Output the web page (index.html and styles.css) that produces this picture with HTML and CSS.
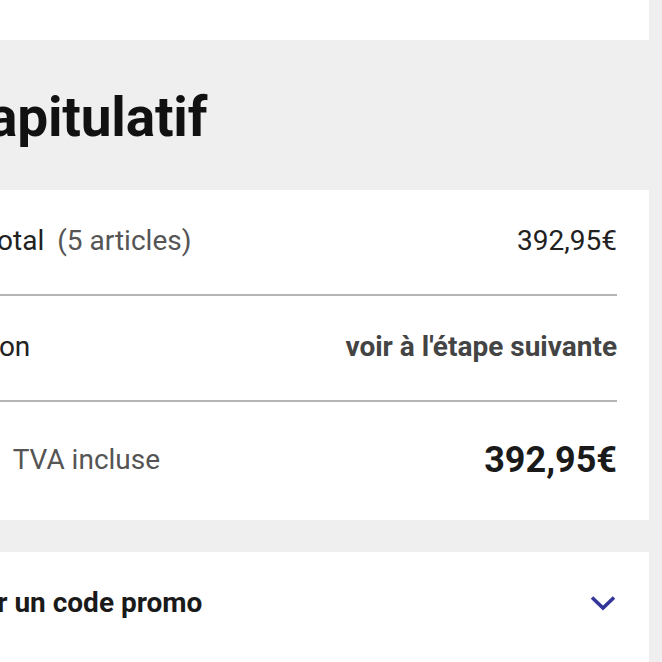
FILE: index.html
```html
<!DOCTYPE html>
<html lang="fr">
<head>
<meta charset="utf-8">
<title>Récapitulatif</title>
<link rel="stylesheet" href="styles.css">
</head>
<body>
<div class="page">
  <div class="top-card"></div>
  <div class="heading-block">
    <h1 class="title">Récapitulatif</h1>
  </div>
  <section class="summary">
    <div class="row">
      <div class="label">Sous-total<span class="muted count">(5 articles)</span></div>
      <div class="value">392,95€</div>
    </div>
    <div class="row">
      <div class="label">Livraison</div>
      <div class="value next">voir à l'étape suivante</div>
    </div>
    <div class="row row-total">
      <div class="label"><span class="total-label">Total</span><span class="muted">TVA incluse</span></div>
      <div class="value total">392,95€</div>
    </div>
  </section>
  <section class="promo">
    <div class="promo-label">Ajouter un code promo</div>
    <svg class="chevron" width="26" height="17" viewBox="0 0 26 17" aria-hidden="true">
      <polyline points="2,2.5 13,13 24,2.5" fill="none" stroke="#33359a" stroke-width="3.6" stroke-linecap="butt" stroke-linejoin="miter"/>
    </svg>
  </section>
</div>
</body>
</html>
```
FILE: styles.css
```css
html, body {
  margin: 0;
  padding: 0;
}
body {
  background: #efefef;
  font-family: Roboto, "Liberation Sans", Arial, sans-serif;
  color: #212121;
  overflow: hidden;
}
.page {
  width: 763px;
  margin-left: -114px;
}
.top-card {
  height: 40px;
  background: #fff;
}
.heading-block {
  padding: 44px 32px 39px 9px;
}
.title {
  margin: 0;
  font-size: 55px;
  line-height: 67px;
  font-weight: 700;
  color: #111;
  letter-spacing: -0.2px;
}
.summary {
  background: #fff;
  padding: 0 32px;
}
.row {
  display: flex;
  justify-content: space-between;
  align-items: center;
  padding: 30px 0 32px;
  border-bottom: 2px solid #b4b4b4;
  font-size: 28px;
  line-height: 42px;
}
.row-total {
  border-bottom: none;
  padding: 32px 0 34px;
}
.label {
  display: flex;
  align-items: center;
  white-space: nowrap;
}
.muted {
  color: #555;
}
.count {
  margin-left: 13px;
}
.value {
  white-space: nowrap;
}
.next {
  font-weight: 700;
  color: #444;
}
.total-label {
  font-weight: 700;
  font-size: 28px;
  margin-right: 32px;
}
.total {
  font-size: 36px;
  line-height: 52px;
  font-weight: 700;
  color: #1a1a1a;
}
.promo {
  margin-top: 32px;
  background: #fff;
  display: flex;
  justify-content: space-between;
  align-items: center;
  padding: 30px 32px 40px 29px;
}
.promo-label {
  font-size: 28px;
  line-height: 42px;
  font-weight: 700;
  color: #1a1a1a;
}
.chevron {
  display: block;
  margin-right: 1px;
}
```
